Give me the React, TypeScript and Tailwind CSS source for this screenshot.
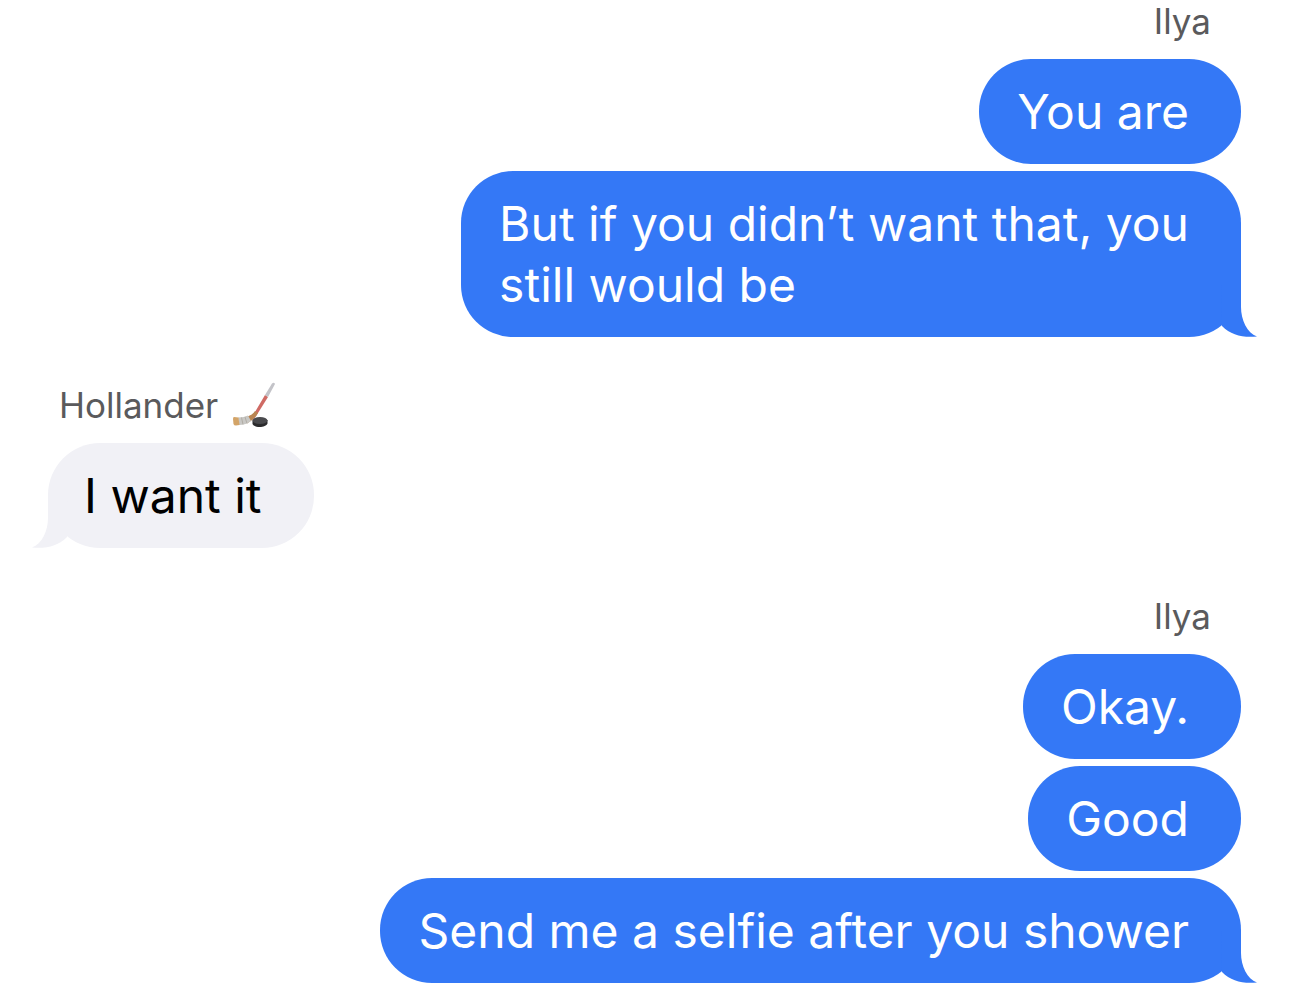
import { FC } from 'react';

interface Message {
    text: string;
    tail?: boolean;
}

interface MessageGroupProps {
    sender: string;
    mine?: boolean;
    stick?: boolean;
    messages: Message[];
}

const HockeyStick: FC = () => (
    <svg viewBox="0 0 44 46" className="w-11 h-[46px]" role="img" aria-label="Hockey stick and puck">
        <path d="M33 13 36 15 26 31Q24 35 20 38L17 34Q21 33 23 30Z" fill="#cf6a64" />
        <path d="M40 1.5Q42 0 43 2L36 15 33 13Z" fill="#c3c3c8" />
        <path d="M23 29 26 31Q22 38 15 41.5L13 35Q20 34 23 29Z" fill="#b98552" />
        <path d="M6 35.5Q12 35.5 16 33.5L19 39Q14 43 7 43Z" fill="#c9c8c5" />
        <path d="M9.5 35.5 11 42.5M13 35 15 41.5" stroke="#a9a49c" strokeWidth="0.8" />
        <path d="M2 35Q1 35 1 37L1.5 42Q2 43.5 4 43.5L7.5 43 6.5 35.5Z" fill="#d3a468" />
        <path d="M20.5 38.5V42C22 46 34 46 35.5 41.5V38Z" fill="#2b2b2d" />
        <ellipse cx="28" cy="38.5" rx="7.5" ry="3.5" fill="#4a4a4d" />
    </svg>
);

const Tail: FC<{ mine?: boolean }> = ({ mine }) => (
    <svg
        viewBox="0 0 36 52"
        className={
            mine
                ? 'absolute bottom-0 -right-4 w-9 h-[52px] text-[#3478f6]'
                : 'absolute bottom-0 -left-4 w-9 h-[52px] -scale-x-100 text-[#f1f1f6]'
        }
        fill="currentColor"
        aria-hidden="true"
    >
        <path d="M20 0V22C20 35 26 48 36 51.5C22 53 10 50 1 41L0 0Z" />
    </svg>
);

const Bubble: FC<Message & { mine?: boolean }> = ({ text, tail, mine }) => (
    <li
        className={
            mine
                ? 'relative rounded-[52px] bg-[#3478f6] py-[22px] pl-[38px] pr-[52px] text-white'
                : 'relative rounded-[52px] bg-[#f1f1f6] py-[22px] pl-9 pr-[52px] text-black'
        }
    >
        {tail && <Tail mine={mine} />}
        <p className="relative whitespace-pre-line text-[48px] leading-[61px]">{text}</p>
    </li>
);

const MessageGroup: FC<MessageGroupProps> = ({ sender, mine, stick, messages }) => (
    <section className={mine ? 'flex flex-col items-end' : 'flex flex-col items-start'}>
        <h2
            className={
                mine
                    ? 'flex h-[42px] items-center pr-[30px] text-[35px] text-[#5a5a5c]'
                    : 'flex h-[42px] items-center gap-3.5 pl-[11px] text-[35px] text-[#5a5a5c]'
            }
        >
            {sender}
            {stick && <HockeyStick />}
        </h2>
        <ul className={mine ? 'mt-[17px] flex flex-col items-end gap-[7px]' : 'mt-[17px] flex flex-col items-start gap-[7px]'}>
            {messages.map((message) => (
                <Bubble key={message.text} mine={mine} {...message} />
            ))}
        </ul>
    </section>
);

export default function App() {
    return (
        <main className="flex flex-col gap-[47px] bg-white px-12 pb-4 font-['Inter',sans-serif]">
            <MessageGroup
                sender="Ilya"
                mine
                messages={[{ text: 'You are' }, { text: 'But if you didn’t want that, you\nstill would be', tail: true }]}
            />
            <MessageGroup sender="Hollander" stick messages={[{ text: 'I want it', tail: true }]} />
            <MessageGroup
                sender="Ilya"
                mine
                messages={[{ text: 'Okay.' }, { text: 'Good' }, { text: 'Send me a selfie after you shower', tail: true }]}
            />
        </main>
    );
}
